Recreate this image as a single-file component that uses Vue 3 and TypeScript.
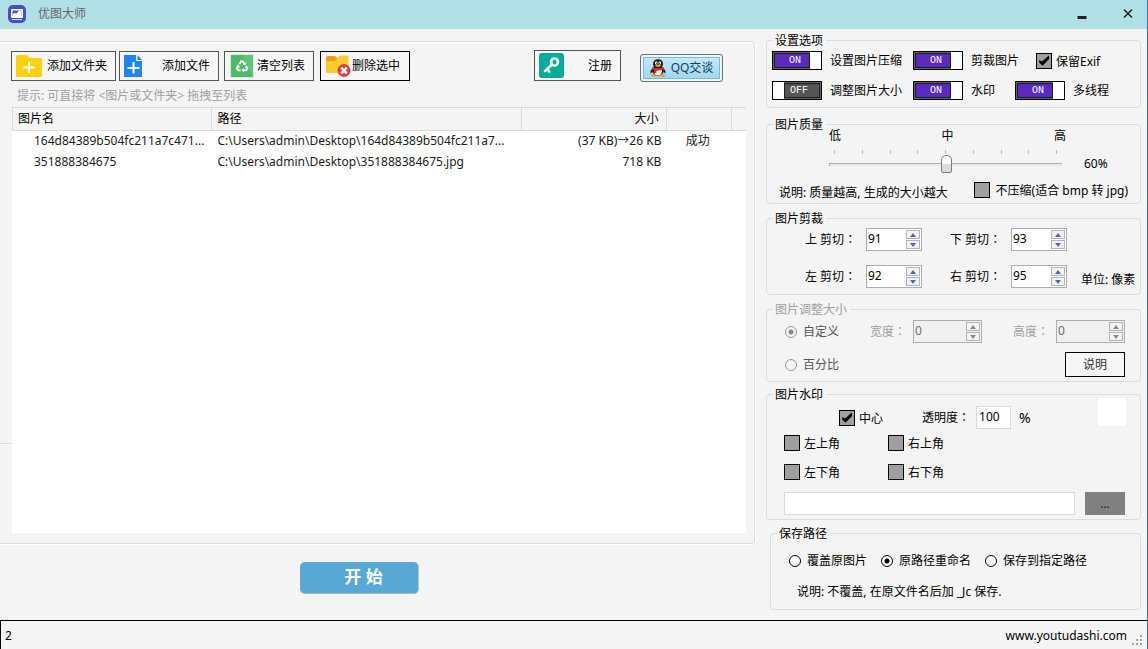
<script setup lang="ts">
import { ref, reactive } from 'vue'

interface Toggle { label: string; on: boolean; size: string }
interface FileRow { name: string; path: string; size: string; status: string }

const toggleRows = reactive<Toggle[][]>([
  [
    { label: '设置图片压缩', on: true, size: 'wide' },
    { label: '剪裁图片', on: true, size: 'mid' },
  ],
  [
    { label: '调整图片大小', on: false, size: 'wide' },
    { label: '水印', on: true, size: 'narrow' },
    { label: '多线程', on: true, size: 'auto' },
  ],
])

const files: FileRow[] = [
  { name: '164d84389b504fc211a7c471...', path: 'C:\\Users\\admin\\Desktop\\164d84389b504fc211a7...', size: '(37 KB)→26 KB', status: '成功' },
  { name: '351888384675', path: 'C:\\Users\\admin\\Desktop\\351888384675.jpg', size: '718 KB', status: '' },
]

const crops = reactive([
  { id: 'top', label: '上 剪切', value: 91 },
  { id: 'bottom', label: '下 剪切', value: 93 },
  { id: 'left', label: '左 剪切', value: 92 },
  { id: 'right', label: '右 剪切', value: 95 },
])

const sizes = reactive([
  { id: 'width', label: '宽度', value: 0 },
  { id: 'height', label: '高度', value: 0 },
])

const corners = reactive([
  { label: '左上角', on: false },
  { label: '右上角', on: false },
  { label: '左下角', on: false },
  { label: '右下角', on: false },
])

const saveModes = ['覆盖原图片', '原路径重命名', '保存到指定路径']
const saveMode = ref('原路径重命名')
const keepExif = ref(true)
const noCompress = ref(false)
const center = ref(true)
const quality = ref(60)
const opacity = ref('100')
const markPath = ref('')
const resizeMode = ref('custom')
</script>

<template>
  <div class="window">
    <header class="titlebar">
      <svg class="app-icon" viewBox="0 0 18 18" aria-hidden="true">
        <rect width="18" height="18" rx="5" fill="#4650c4" />
        <rect x="3" y="4" width="12" height="9" rx="1" fill="#fff" />
        <path d="M4.500 5.500h9v5.500h-9z" fill="#4650c4" />
        <path d="M4.500 9l2-1 2 .5 2.500-3h2.500v5.500h-9z" fill="#fff" />
        <path d="M4 14.500h10" stroke="#cfd3ff" />
      </svg>
      <span class="title">优图大师</span>
      <button class="win-btn" type="button" aria-label="最小化">
        <svg viewBox="0 0 12 12"><path d="M1.500 9.500h9" stroke="#222" stroke-width="3" /></svg>
      </button>
      <button class="win-btn" type="button" aria-label="关闭">
        <svg viewBox="0 0 12 12"><path d="M2 1.500l8 8M10 1.500l-8 8" stroke="#222" stroke-width="1.500" /></svg>
      </button>
    </header>

    <main class="main">
      <div class="left">
        <section class="files">
          <div class="toolbar">
            <button class="tool folder" type="button">
              <svg width="26" height="22" viewBox="0 0 26 22" aria-hidden="true">
                <path d="M0 1.500Q0 0 1.500 0H11l3 3h10.500Q26 3 26 4.500v16q0 1.500-1.500 1.500h-23Q0 22 0 20.500z" fill="#fdd10e" />
                <path d="M13 7v11M7.500 12.500h11" stroke="#fff" stroke-width="2" />
              </svg>
              <span>添加文件夹</span>
            </button>
            <button class="tool file" type="button">
              <svg width="18" height="22" viewBox="0 0 18 22" aria-hidden="true">
                <path d="M0 0h12v6h6v16H0z" fill="#1f86f7" />
                <path d="M13.500 0L18 5h-4.500z" fill="#1f86f7" />
                <path d="M9.500 7v11.500M3.500 13h12" stroke="#fff" stroke-width="2" />
              </svg>
              <span>添加文件</span>
            </button>
            <button class="tool clear" type="button">
              <svg width="24" height="24" viewBox="0 0 24 24" aria-hidden="true">
                <rect width="24" height="24" fill="#d9eedd" />
                <rect x="1" y="1" width="22" height="22" fill="#4fb96a" />
                <path d="M13 1h10v22z" fill="#5fc478" />
                <g fill="none" stroke="#fff" stroke-width="2">
                  <path d="M9.500 10l1.800-2.800h1.500L14.500 10" />
                  <path d="M16 12l1.300 2.500-1 1.800H13.500" />
                  <path d="M10.500 16.300H8l-1-1.800L8.300 12" />
                </g>
                <path d="M12.800 10.500l3.200.5.300-3zM14 14v4.500l-2.500-2.200zM6 12l3-1.500.8 3z" fill="#fff" />
              </svg>
              <span>清空列表</span>
            </button>
            <button class="tool remove" type="button">
              <svg width="26" height="22" viewBox="0 0 26 22" aria-hidden="true">
                <path d="M0 3q0-2 2-2h7l2 2H22v7H0z" fill="#f09a1a" />
                <path d="M0 6h9l3-3 1-2.500h8q1.500 0 1.500 1.500v14.500q0 1.500-1.500 1.500H1.500Q0 18 0 16.500z" fill="#fbcb2c" />
                <circle cx="18" cy="15.500" r="6.500" fill="#df3d42" />
                <path d="M15.200 12.700l5.600 5.600M20.800 12.700l-5.600 5.600" stroke="#fff" stroke-width="2.600" />
              </svg>
              <span>删除选中</span>
            </button>
            <button class="tool register" type="button">
              <svg width="25" height="25" viewBox="0 0 25 25" aria-hidden="true">
                <rect width="25" height="25" rx="3" fill="#04aca0" />
                <circle cx="15.500" cy="9" r="3.500" fill="none" stroke="#fffbe6" stroke-width="2.600" />
                <path d="M13 11.500l-7 6.500M8 16l2.200 2.500" stroke="#fffbe6" stroke-width="2.600" stroke-linecap="round" />
              </svg>
              <span>注册</span>
            </button>
            <button class="qq" type="button">
              <svg width="16" height="18" viewBox="0 0 16 18" aria-hidden="true">
                <path d="M2.500 9Q0 11.500.5 14.500l2-1.500zM13.500 9q2.500 2.500 2 5.500l-2-1.500z" fill="#1a1a1a" />
                <ellipse cx="4.500" cy="16.300" rx="3.500" ry="1.500" fill="#f5a21b" />
                <ellipse cx="11.500" cy="16.300" rx="3.500" ry="1.500" fill="#f5a21b" />
                <ellipse cx="8" cy="11.500" rx="5.800" ry="5" fill="#1a1a1a" />
                <ellipse cx="8" cy="12.500" rx="4" ry="3.700" fill="#fff" />
                <ellipse cx="8" cy="5" rx="5" ry="4.800" fill="#1a1a1a" />
                <ellipse cx="6.300" cy="4" rx="1.300" ry="1.700" fill="#fff" />
                <ellipse cx="9.700" cy="4" rx="1.300" ry="1.700" fill="#fff" />
                <circle cx="6.600" cy="4.200" r=".6" fill="#111" />
                <circle cx="9.400" cy="4.200" r=".6" fill="#111" />
                <ellipse cx="8" cy="6.800" rx="3" ry="1.100" fill="#f5a21b" />
                <path d="M2.500 8q5.500 3 11 0l.5 2q-4 2-7.500 1.800V14H4v-3l-1.800-1z" fill="#e0252b" />
              </svg>
              <span>QQ交谈</span>
            </button>
          </div>
          <p class="hint">提示: 可直接将 &lt;图片或文件夹&gt; 拖拽至列表</p>
          <div class="list">
            <table>
              <colgroup>
                <col class="c-name" /><col class="c-path" /><col class="c-size" /><col class="c-status" /><col class="c-rest" />
              </colgroup>
              <thead>
                <tr><th>图片名</th><th>路径</th><th class="num">大小</th><th></th><th></th></tr>
              </thead>
              <tbody>
                <tr v-for="f in files" :key="f.name">
                  <td class="name">{{ f.name }}</td>
                  <td>{{ f.path }}</td>
                  <td class="num">{{ f.size }}</td>
                  <td class="status">{{ f.status }}</td>
                  <td></td>
                </tr>
              </tbody>
            </table>
          </div>
        </section>
        <div class="action">
          <button class="start" type="button">开 始</button>
        </div>
      </div>

      <div class="right">
        <fieldset class="group g-options">
          <legend>设置选项</legend>
          <div v-for="(row, i) in toggleRows" :key="i" class="toggle-row">
            <label v-for="t in row" :key="t.label" class="toggle-item" :class="t.size">
              <span class="toggle" :class="{ off: !t.on }">
                <input v-model="t.on" type="checkbox" role="switch" />
                <span class="track">{{ t.on ? 'ON' : 'OFF' }}</span>
                <span class="knob"></span>
              </span>
              <span>{{ t.label }}</span>
            </label>
            <label v-if="i === 0" class="check"><input v-model="keepExif" type="checkbox" /><span>保留Exif</span></label>
          </div>
        </fieldset>

        <fieldset class="group g-quality">
          <legend>图片质量</legend>
          <div class="quality">
            <div class="scale">
              <div class="scale-labels"><span>低</span><span>中</span><span>高</span></div>
              <div class="ticks"><i v-for="n in 9" :key="n"></i></div>
              <input v-model.number="quality" class="slider" type="range" min="20" max="100" step="10" aria-label="图片质量" />
            </div>
            <output>{{ quality }}%</output>
          </div>
          <div class="quality-note">
            <span>说明: 质量越高, 生成的大小越大</span>
            <label class="check spaced"><input v-model="noCompress" type="checkbox" /><span>不压缩(适合 bmp 转 jpg)</span></label>
          </div>
        </fieldset>

        <fieldset class="group g-crop">
          <legend>图片剪裁</legend>
          <div class="crop-grid">
            <template v-for="c in crops" :key="c.id">
              <label :for="c.id">{{ c.label }}<span class="colon">：</span></label>
              <span class="spin">
                <input :id="c.id" v-model.number="c.value" type="number" />
                <span class="arrows">
                  <button type="button" aria-label="增加" @click="c.value++"><svg viewBox="0 0 6 4"><path d="M0 4l3-4 3 4z" /></svg></button>
                  <button type="button" aria-label="减少" @click="c.value--"><svg viewBox="0 0 6 4"><path d="M0 0l3 4 3-4z" /></svg></button>
                </span>
              </span>
              <span v-if="c.id === 'bottom'"></span>
              <span v-if="c.id === 'right'" class="unit">单位: 像素</span>
            </template>
          </div>
        </fieldset>

        <fieldset class="group g-resize">
          <legend>图片调整大小</legend>
          <div class="resize-row">
            <label class="radio"><input v-model="resizeMode" type="radio" name="resize" value="custom" disabled /><span>自定义</span></label>
            <div v-for="s in sizes" :key="s.id" class="dimension">
              <label :for="s.id">{{ s.label }}<span class="colon">：</span></label>
              <span class="spin disabled">
                <input :id="s.id" v-model.number="s.value" type="number" disabled />
                <span class="arrows">
                  <button type="button" aria-label="增加" disabled><svg viewBox="0 0 6 4"><path d="M0 4l3-4 3 4z" /></svg></button>
                  <button type="button" aria-label="减少" disabled><svg viewBox="0 0 6 4"><path d="M0 0l3 4 3-4z" /></svg></button>
                </span>
              </span>
            </div>
          </div>
          <div class="resize-row second">
            <label class="radio"><input v-model="resizeMode" type="radio" name="resize" value="percent" disabled /><span>百分比</span></label>
            <button class="explain" type="button">说明</button>
          </div>
        </fieldset>

        <fieldset class="group g-mark">
          <legend>图片水印</legend>
          <div class="mark-top">
            <label class="check"><input v-model="center" type="checkbox" /><span>中心</span></label>
            <label class="alpha" for="alpha">透明度<span class="colon">：</span></label>
            <input id="alpha" v-model="opacity" class="box" type="text" />
            <span class="percent">%</span>
            <span class="swatch"></span>
          </div>
          <div class="corners">
            <label v-for="c in corners" :key="c.label" class="check"><input v-model="c.on" type="checkbox" /><span>{{ c.label }}</span></label>
          </div>
          <div class="path-row">
            <input v-model="markPath" class="box" type="text" aria-label="水印图片路径" />
            <button class="browse" type="button">...</button>
          </div>
        </fieldset>

        <fieldset class="group g-save">
          <legend>保存路径</legend>
          <div class="save-row">
            <label v-for="m in saveModes" :key="m" class="radio"><input v-model="saveMode" type="radio" name="save" :value="m" /><span>{{ m }}</span></label>
          </div>
          <p class="save-note">说明: 不覆盖, 在原文件名后加 _Jc 保存.</p>
        </fieldset>
      </div>
    </main>

    <footer class="statusbar">
      <span>2</span>
      <a href="#">www.youtudashi.com</a>
      <svg class="grip" width="12" height="12" viewBox="0 0 12 12" aria-hidden="true">
        <path d="M8 0h2v2H8zM4 4h2v2H4zM8 4h2v2H8zM0 8h2v2H0zM4 8h2v2H4zM8 8h2v2H8z" fill="#a3a3a3" />
      </svg>
    </footer>
  </div>
</template>

<style>
body { margin: 0; background: #f4f4f4; }
</style>

<style scoped>
.window {
  box-sizing: border-box;
  min-height: 100vh;
  display: flex;
  flex-direction: column;
  background: #f4f4f4;
  border-right: 1px solid #1879bd;
  color: #000;
  font: 12px/16px "Noto Sans", "Noto Sans CJK SC", sans-serif;
}
.window *, .window *::before { box-sizing: border-box; }
button, input { font: inherit; color: inherit; margin: 0; padding: 0; }
p { margin: 0; }
.colon { font-family: "Noto Sans CJK TC", sans-serif; line-height: 1; }

.titlebar {
  display: flex;
  align-items: center;
  height: 29px;
  padding: 0 13px 2px 8px;
  background: #b0e0e6;
  color: #666;
}
.app-icon { width: 18px; height: 18px; margin-right: 12px; }
.title { flex: 1; }
.win-btn { display: flex; width: 12px; height: 12px; border: 0; background: none; margin-left: 34px; }
.win-btn svg { width: 12px; height: 12px; }

.main { flex: 1; display: flex; }
.left { flex: 1; min-width: 0; display: flex; flex-direction: column; padding-top: 12px; }
.files {
  flex: 1;
  position: relative;
  display: flex;
  flex-direction: column;
  padding: 8px 8px 10px 11px;
  border: 1px solid #d3dee6;
  border-left: 0;
  border-radius: 0 4px 4px 0;
  box-shadow: 1px 1px 0 #fff, inset 0 1px 0 #fff;
}
.files::before { content: ""; position: absolute; left: 0; top: 401px; width: 11px; border-top: 1px solid #dcdcdc; }
.toolbar { display: flex; align-items: flex-end; height: 32px; }
.tool {
  display: flex;
  align-items: center;
  justify-content: space-between;
  height: 30px;
  padding: 0 8px 0 4px;
  border: 1px solid #555;
  background: #f6f6f6;
  line-height: 20px;
  white-space: nowrap;
  margin-bottom: 1px;
}
.tool svg { flex: none; }
.folder { width: 105px; margin-right: 3px; }
.file { width: 100px; margin-right: 5px; }
.clear { width: 90px; margin-right: 6px; padding-left: 5px; }
.remove { width: 90px; border-color: #000; padding: 0 9px 0 5px; }
.register { width: 87px; height: 31px; margin-left: auto; }
.qq {
  display: flex;
  align-items: center;
  justify-content: center;
  gap: 5px;
  width: 83px;
  height: 28px;
  margin: 0 23px 0 19px;
  border: 1px solid #707070;
  border-radius: 3px;
  background: linear-gradient(#c8ecfb, #9bd4f2);
  box-shadow: inset 0 0 0 2px #e8f7fd, inset 0 0 0 3px #7fb9da;
  color: #173d57;
  font-size: 12px;
  white-space: nowrap;
}
.hint { padding: 6px 5px 3px 6px; color: #a0a0a0; line-height: 16px; }
.list { flex: 1; background: #fff; margin-left: 1px; }
table { width: 100%; border-collapse: separate; border-spacing: 0; table-layout: fixed; }
.c-name { width: 27.300%; }
.c-path { width: 42.200%; }
.c-size { width: 19.800%; }
.c-status { width: 8.800%; }
th {
  height: 24px;
  padding: 0 8px 0 5px;
  text-align: left;
  font-weight: 400;
  background: #f4f4f4;
  border: 1px solid #dadada;
  border-left: 0;
}
th:first-child { border-left: 1px solid #dadada; }
th:last-child { border-right: 0; }
td { height: 21px; padding: 0 6px 2px 5px; white-space: nowrap; color: #1b1b1b; }
td.name { padding: 0 0 2px 22px; }
.num { text-align: right; }
td.status { text-align: center; padding: 0 4px 2px 0; }
.action { display: flex; justify-content: center; padding: 18px 36px 26px 0; }
.start {
  width: 119px;
  height: 32px;
  padding: 0 0 2px 9px;
  border: 0;
  border-bottom: 1px solid #b0b8bc;
  border-right: 1px solid #b0c4ce;
  border-radius: 5px;
  background: #58a8d6;
  color: #fff;
  font-size: 17px;
  font-weight: 700;
}

.right { width: 392px; flex: none; padding: 3px 6px 0 11px; white-space: nowrap; }
.group {
  --inset: 0px;
  min-width: 0;
  margin: 0;
  padding: 0 0 0 var(--inset);
  border: 1px solid #d3dee6;
  border-radius: 4px;
}
legend { margin-left: calc(6px - var(--inset)); padding: 1px 3px 0 2px; line-height: 16px; height: 16px; }
.g-options { --inset: 5px; padding-top: 3px; padding-bottom: 7px; margin-bottom: 8px; }
.g-quality { padding-bottom: 4px; margin-bottom: 6px; }
.g-crop { --inset: 38px; padding-top: 2px; padding-bottom: 6px; margin-bottom: 6px; }
.g-resize { --inset: 18px; padding: 3px 15px 4px var(--inset); margin-bottom: 4px; }
.g-mark { --inset: 17px; padding: 4px 15px 4px var(--inset); margin-bottom: 5px; }
.g-save { --inset: 18px; padding-top: 12px; padding-bottom: 9px; margin-left: 4px; }

.toggle-row { display: flex; height: 19px; }
.toggle-row + .toggle-row { margin-top: 11px; }
.toggle-item { display: flex; align-items: center; gap: 8px; line-height: 20px; }
.toggle-item.wide { width: 141px; }
.toggle-item.mid { width: 123px; }
.toggle-item.narrow { width: 102px; }
.toggle { position: relative; display: flex; width: 50px; height: 19px; border: 1px solid #000; background: #666; }
.toggle input { position: absolute; inset: 0; width: 100%; height: 100%; opacity: 0; }
.track {
  flex: 1;
  margin: 1px 0 1px 1px;
  padding-left: 6px;
  border: 1px solid #1c1c1c;
  background: #5a2abf;
  color: #fff;
  font: 10px/14px "Liberation Mono", monospace;
  text-align: center;
}
.knob { width: 11px; background: #fff; }
.off { flex-direction: row-reverse; }
.off .track { margin: 1px 1px 1px 0; padding: 0 6px 0 0; background: #555; }

.check { display: flex; align-items: center; gap: 4px; line-height: 16px; }
.check.spaced { gap: 6px; }
.check span { padding-top: 2px; }
.check input {
  appearance: none;
  flex: none;
  width: 16px;
  height: 16px;
  border: 1px solid #000;
  background: #a0a0a0;
}
.check input:checked::before {
  content: "";
  display: block;
  width: 14px;
  height: 14px;
  background: #000;
  clip-path: polygon(16% 46%, 36% 58%, 84% 14%, 88% 38%, 40% 88%, 16% 66%);
}

.quality { display: flex; align-items: flex-end; margin-top: -2px; padding-left: 62px; }
.scale { width: 233px; }
.scale-labels { display: flex; justify-content: space-between; margin-right: -4px; line-height: 12px; }
.ticks { display: flex; justify-content: space-between; padding: 8px 5px 1px; }
.ticks i { width: 1px; height: 4px; background: #bbb; }
.slider { appearance: none; display: block; width: 100%; height: 18px; background: none; }
.slider::-webkit-slider-runnable-track {
  height: 3px;
  border-top: 1px solid #aab0b0;
  border-left: 1px solid #aab0b0;
  background: #e6eaea;
}
.slider::-webkit-slider-thumb {
  appearance: none;
  width: 11px;
  height: 18px;
  margin-top: -9px;
  border: 1px solid #7c7c7c;
  border-radius: 5px 5px 2px 2px;
  background: linear-gradient(#fbfbfb 50%, #dcdcdc 50%);
}
output { margin-left: 22px; line-height: 18px; }
.quality-note { display: flex; align-items: flex-end; justify-content: space-between; height: 26px; padding: 0 12px; }
.quality-note > span { line-height: 12px; }

.crop-grid { display: grid; grid-template-columns: 61px 56px 89px 56px 1fr; row-gap: 14px; align-items: center; }
.crop-grid label:nth-of-type(even) { padding-left: 28px; }
.unit { padding: 6px 0 0 14px; }
.spin { display: flex; height: 23px; padding: 1px; border: 1px solid #abadb3; background: #fff; }
.spin > input {
  flex: 1;
  width: 0;
  min-width: 0;
  padding-bottom: 2px;
  border: 0;
  background: none;
  outline: 0;
  appearance: textfield;
}
.spin > input::-webkit-inner-spin-button { display: none; }
.arrows { display: flex; flex-direction: column; gap: 1px; width: 14px; }
.arrows button {
  flex: 1;
  display: flex;
  align-items: center;
  justify-content: center;
  border: 1px solid #b4b4b8;
  background: #f2f2f2;
}
.arrows svg { width: 6px; height: 4px; fill: #4f66b5; }
.disabled { background: #f0f0f0; color: #6d6d6d; }
.disabled svg { fill: #888; }

.g-resize { color: #a0a0a0; }
.resize-row { display: flex; align-items: center; justify-content: space-between; height: 23px; }
.resize-row.second { height: 25px; margin-top: 9px; }
.dimension { display: flex; align-items: center; }
.dimension label { width: 43px; }
.dimension .spin { width: 69px; }
.radio { display: flex; align-items: center; gap: 6px; }
.g-resize .radio { color: #555; }
.radio input {
  appearance: none;
  width: 12px;
  height: 12px;
  border: 1px solid #000;
  border-radius: 50%;
  background: #fff;
}
.radio input:checked { background: radial-gradient(circle, #000 0 2px, #fff 3px); }
.radio input:disabled { border-color: #999; background: #f4f4f4; }
.radio input:disabled:checked { background: radial-gradient(circle, #888 0 2px, #f4f4f4 3px); }
.explain { width: 60px; height: 25px; border: 1px solid #000; background: #f6f6f6; color: #333; }

.mark-top { display: flex; align-items: center; height: 23px; padding-left: 55px; }
.alpha { margin-left: 39px; width: 54px; }
.box { height: 23px; border: 1px solid #dadada; background: #fff; padding: 0 2px 2px; outline: 0; }
.mark-top .box { width: 35px; }
.percent { margin-left: 8px; font-size: 14px; }
.swatch { width: 28px; height: 28px; margin: -12px -1px 0 auto; background: #fff; }
.corners { display: grid; grid-template-columns: 104px 1fr; row-gap: 13px; padding: 6px 0 12px; }
.corners .check { height: 16px; }
.path-row { display: flex; gap: 10px; }
.path-row .box { flex: 1; min-width: 0; }
.browse { width: 40px; height: 23px; border: 0; background: #808080; color: #222; }

.save-row { display: flex; gap: 14px; }
.save-note { padding: 15px 0 0 8px; }

.statusbar {
  display: flex;
  align-items: center;
  height: 29px;
  padding: 2px 3px 0 4px;
  border: solid #000;
  border-width: 1px 0 0 1px;
}
.statusbar a { margin-left: auto; color: #000; text-decoration: none; }
.grip { margin: 10px 0 0 5px; }
</style>
